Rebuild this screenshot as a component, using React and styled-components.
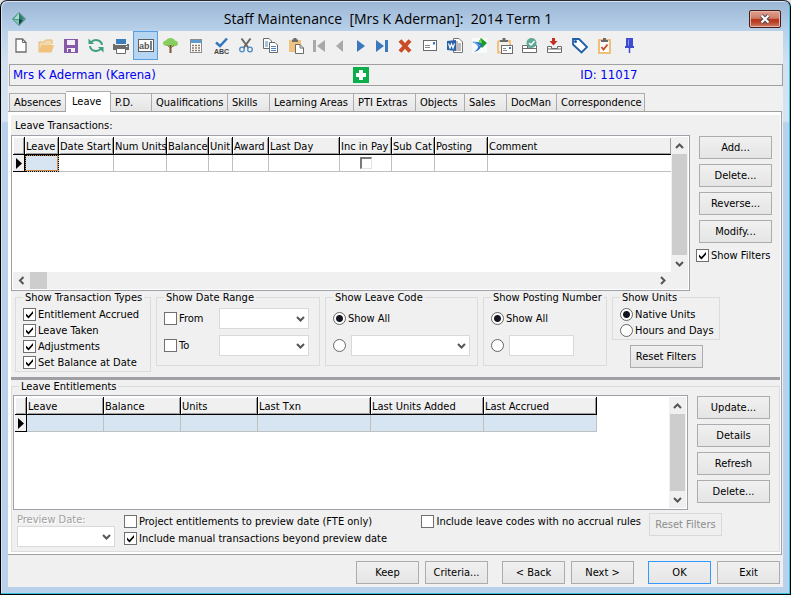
import React from 'react'
import styled, { createGlobalStyle, css } from 'styled-components'

const GlobalStyle = createGlobalStyle`
  * { box-sizing: border-box; }
  body {
    margin: 0;
    background: #dfe3e8;
    color: #000;
    font: 11px/13px "DejaVu Sans Condensed", "DejaVu Sans", sans-serif;
  }
  button, input, select { font: inherit; color: inherit; margin: 0; }
`

const check =
  "url(\"data:image/svg+xml,%3Csvg xmlns='http://www.w3.org/2000/svg' viewBox='0 0 11 11'%3E%3Cpath d='M2 4.5 L4.5 7 L9 2 V4.5 L4.5 9.5 L2 7 Z' fill='%23000'/%3E%3C/svg%3E\")"

/* ---------- window ---------- */

const Window = styled.div`
  min-height: 100vh;
  display: flex;
  flex-direction: column;
  padding: 0 7px 7px;
  border: 1px solid #000;
  border-top-color: #2a2a30;
  border-radius: 7px 7px 0 0;
  background: linear-gradient(#9bb6d5, #b9d1ea 30px, #d2e0f0 60px, #d6e3f2 120px, #b9d1ea 122px);
  box-shadow: inset -1px -1px #35c3dd, inset 1px 1px #d5e4f3;
`

const TitleBar = styled.header`
  display: grid;
  grid-template-columns: 16px 1fr 34px;
  align-items: center;
  height: 30px;
  padding: 6px 0 0 3px;
`

const Title = styled.h1`
  margin: 0;
  font: 14px/20px "Open Sans", "Noto Sans", sans-serif;
  text-align: center;
  white-space: pre;
`

const CloseButton = styled.button`
  width: 32px;
  height: 18px;
  padding: 0;
  display: grid;
  place-items: center;
  border: 1px solid #4a1c18;
  border-radius: 2px;
  background: linear-gradient(#e0a08f, #cf7d68 46%, #b8391d 50%, #b8391d 64%, #cd7a66);
  box-shadow: inset 0 0 0 1px #e6b8ac;
`

const Body = styled.main`
  flex: 1;
  display: flex;
  flex-direction: column;
  background: #f0f0f0;
`

/* ---------- toolbar ---------- */

const ToolBar = styled.div`
  display: flex;
  height: 33px;
`

const ToolButton = styled.button`
  width: ${(p) => (p.$narrow ? '21px' : '25px')};
  height: 29px;
  padding: 0;
  display: grid;
  place-items: center;
  border: 1px solid ${(p) => (p.$active ? '#5a9ee0' : 'transparent')};
  background: ${(p) => (p.$active ? '#b5d5f3' : 'transparent')};
  svg { display: block; overflow: visible; }
`

const NameBar = styled.div`
  display: grid;
  grid-template-columns: 340fr 228fr 202fr;
  align-items: center;
  height: 22px;
  padding-left: 3px;
  margin: 0 0 5px 1px;
  border: 1px solid #a0a0a0;
  color: #0000f0;
  font-size: 13px;
  line-height: 16px;
  svg { display: block; }
`

/* ---------- tabs ---------- */

const Tabs = styled.div`
  display: flex;
  align-items: flex-end;
  height: 20px;
  padding-left: 1px;
`

const Tab = styled.button`
  width: ${(p) => p.$w}px;
  height: 18px;
  padding: 0 0 0 4px;
  text-align: left;
  white-space: nowrap;
  border: 1px solid #acacac;
  border-width: 1px 1px 0 0;
  background: linear-gradient(#f2f2f2, #e5e5e5);
  &:first-child { border-left-width: 1px; }
  ${(p) =>
    p.$active &&
    css`
      height: 21px;
      margin-bottom: -1px;
      padding: 0 0 2px 6px;
      background: #fff;
      position: relative;
    `}
`

const TabPage = styled.section`
  flex: 1;
  display: flex;
  flex-direction: column;
  margin-right: 1px;
  padding: 3px 1px 2px 3px;
  background: #fff;
  border: 1px solid #a0a0a0;
  border-left: 0;
`

const Page = styled.div`
  flex: 1;
  display: flex;
  flex-direction: column;
  background: #f0f0f0;
`

const Caption = styled.h2`
  margin: 0;
  padding: 4px 4px 3px;
  font: inherit;
`

/* ---------- controls ---------- */

const Button = styled.button`
  width: ${(p) => (p.$small ? '63px' : '73px')};
  height: 23px;
  padding: 0;
  border: 1px solid ${(p) => (p.$primary ? '#3399ff' : '#acacac')};
  background: linear-gradient(#f0f0f0, #e5e5e5);
  &:disabled {
    color: #8c8c8c;
    border-color: #d9d9d9;
    background: #efefef;
  }
`

const Choice = styled.label`
  display: flex;
  align-items: center;
  gap: 2px;
  height: 16px;
  white-space: nowrap;
`

const Tick = styled.input`
  appearance: none;
  flex: none;
  width: 13px;
  height: 13px;
  border: 1px solid #707070;
  background: #fff;
  &:checked { background: #fff ${check}; }
`

const GridTick = styled(Tick)`
  display: block;
  width: 12px;
  height: 12px;
  margin: 0 auto;
  border: 1px solid #e3e3e3;
  border-top: 2px solid #7a7a7a;
  border-left: 2px solid #7a7a7a;
`

const Dot = styled.input`
  appearance: none;
  flex: none;
  width: 13px;
  height: 13px;
  border: 1px solid #666;
  border-radius: 50%;
  background: #fff;
  &:checked { background: radial-gradient(circle, #15151f 3px, #fff 4px); }
`

const TextBox = styled.input`
  width: 65px;
  height: 21px;
  border: 1px solid #d9d9d9;
  background: #fff;
`

const ComboFrame = styled.span`
  display: grid;
  align-items: center;
  select, svg { grid-area: 1 / 1; }
  select {
    appearance: none;
    width: 100%;
    height: 21px;
    border: 1px solid #d9d9d9;
    border-radius: 0;
    background: #fff;
    opacity: 1;
  }
  svg {
    justify-self: end;
    margin-right: 4px;
    pointer-events: none;
  }
`

const chevrons = {
  up: 'M1 7 L4.5 3.5 L8 7',
  down: 'M1 3 L4.5 6.5 L8 3',
  left: 'M6.5 1 L3 4.5 L6.5 8',
  right: 'M3 1 L6.5 4.5 L3 8',
}

const Chevron = ({ to }) => (
  <svg width="9" height="9" viewBox="0 0 9 9" aria-hidden="true">
    <path d={chevrons[to]} fill="none" stroke="#555" strokeWidth="2" />
  </svg>
)

const Combo = ({ label, ...rest }) => (
  <ComboFrame>
    <select aria-label={label} {...rest}>
      <option value=""></option>
    </select>
    <Chevron to="down" />
  </ComboFrame>
)

const Check = ({ children, checked }) => (
  <Choice>
    <Tick type="checkbox" defaultChecked={checked} />
    {children}
  </Choice>
)

const Radio = ({ children, ...rest }) => (
  <Choice>
    <Dot type="radio" {...rest} />
    {children}
  </Choice>
)

/* ---------- data grid ---------- */

const GridFrame = styled.div`
  flex: 1;
  min-width: 0;
  min-height: ${(p) => p.$min}px;
  display: grid;
  grid-template-columns: minmax(0, 1fr) 17px;
  grid-template-rows: 1fr auto;
  padding: 1px;
  border: 1px solid #a0a0a8;
  background: #fff;
`

const Table = styled.table`
  table-layout: fixed;
  align-self: start;
  width: ${(p) => (p.$fill ? '100%' : '582px')};
  border-collapse: separate;
  border-spacing: 0;
  th, td {
    padding: 0 0 0 1px;
    overflow: hidden;
    white-space: nowrap;
    text-align: left;
    font-weight: normal;
  }
  th {
    height: 18px;
    padding-top: 1px;
    background: #f0f0f0;
    border-right: 1px solid #000;
    border-bottom: 1px solid #000;
    box-shadow: inset 1px 1px #fff, inset -1px -1px #a0a0a0;
  }
  td {
    height: 17px;
    border-right: 1px solid #c0c0c0;
    border-bottom: 1px solid #c0c0c0;
    background: ${(p) => (p.$tint ? '#d7e4f2' : '#fff')};
  }
  td:first-child {
    background: #f0f0f0;
    border-color: #000;
  }
  ${(p) =>
    p.$fill &&
    css`
      th:last-child, td:last-child { border-right: 0; }
    `}
`

const FocusCell = styled.td`
  && {
    background: #d7e4f2;
    outline: 1px dotted #000;
    outline-offset: -1px;
    box-shadow: inset 0 0 0 1px #d08a45;
  }
`

const ScrollBar = styled.div`
  display: flex;
  flex-direction: ${(p) => (p.$across ? 'row' : 'column')};
  padding: ${(p) => (p.$across ? '0' : '0 1px')};
  background: #f0f0f0;
`

const ScrollButton = styled.button`
  flex: none;
  min-width: 15px;
  height: 17px;
  padding: 0 ${(p) => (p.$across ? '4px' : '0')};
  display: grid;
  place-items: center;
  border: 0;
  background: none;
`

const Thumb = styled.div`
  background: #cdcdcd;
  ${(p) => (p.$across ? 'width: 17px; margin-right: auto;' : 'flex: 1;')}
`

const VerticalBar = () => (
  <ScrollBar>
    <ScrollButton aria-label="Scroll up"><Chevron to="up" /></ScrollButton>
    <Thumb />
    <ScrollButton aria-label="Scroll down"><Chevron to="down" /></ScrollButton>
  </ScrollBar>
)

const MarkerIcon = styled.svg`
  display: block;
  margin-left: 2px;
`

const Marker = () => (
  <MarkerIcon width="7" height="11" viewBox="0 0 7 11" aria-hidden="true">
    <path d="M0 0 L6 5.5 L0 11 Z" />
  </MarkerIcon>
)

/* ---------- sections ---------- */

const Split = styled.div`
  flex: ${(p) => (p.$grow ? '1' : 'none')};
  display: flex;
`

const Side = styled.div`
  flex: none;
  display: flex;
  flex-direction: column;
  align-items: flex-start;
  gap: 5px;
  padding: 1px ${(p) => (p.$inset ? '9px' : '8px')} 0 9px;
`

const SideCheck = styled.div`
  margin: -1px -6px 0 -3px;
`

const Filters = styled.div`
  display: flex;
  align-items: flex-start;
  gap: 5px;
  padding: 0 4px 5px;
`

const Group = styled.fieldset`
  flex: none;
  width: ${(p) => p.$w}px;
  min-width: 0;
  margin: 0;
  padding: ${(p) => (p.$roomy ? '4px 7px 9px' : '2px 7px 1px')};
  border: 1px solid #dcdcdc;
  legend { padding: 0 2px; white-space: nowrap; }
`

const FieldGrid = styled.div`
  display: grid;
  grid-template-columns: ${(p) => p.$cols};
  gap: 6px 0;
  align-items: center;
`

const Wide = styled.div`
  grid-column: 1 / -1;
  height: 21px;
  display: flex;
  align-items: center;
`

const UnitsColumn = styled.div`
  display: flex;
  flex-direction: column;
  align-items: center;
  gap: 5px;
`

const Splitter = styled.hr`
  width: 100%;
  height: 3px;
  margin: 0;
  border: 0;
  background: #a0a0a4;
`

const Entitlements = styled.fieldset`
  flex: 1;
  display: flex;
  flex-direction: column;
  min-width: 0;
  margin: 0;
  padding: 2px 0 3px 1px;
  border: 1px solid #dcdcdc;
  legend { margin-left: 6px; padding: 0 2px; }
`

const Options = styled.div`
  display: flex;
  align-items: flex-start;
  padding: 3px 57px 0 4px;
`

const Preview = styled.label`
  width: 98px;
  margin-right: 9px;
  color: #a0a0a0;
  text-shadow: 1px 1px #fff;
`

const OptionList = styled.div`
  display: flex;
  flex-direction: column;
  gap: 1px;
  &:nth-of-type(2) { margin: 0 8px 0 auto; }
`

const Footer = styled.footer`
  display: flex;
  justify-content: flex-end;
  gap: 14px;
  padding: 6px 3px 3px;
`

const FooterPair = styled.div`
  display: flex;
  gap: 6px;
`

/* ---------- icons ---------- */

const Icon = ({ w = 16, h = 16, children }) => (
  <svg width={w} height={h} viewBox={`0 0 ${w} ${h}`} fill="none" aria-hidden="true">
    {children}
  </svg>
)

const AppIcon = () => (
  <Icon w={16} h={16}>
    <path d="M8 1 L15 8 L8 15 L1 8 Z" fill="#4f9d90" stroke="#7fa5ae" />
    <path d="M8 2 V8 H3 Z" fill="#a9dccd" />
    <path d="M8 2 V8 H13 Z" fill="#2f7d6e" />
    <path d="M3 9 H8 V14 Z" fill="#7ec6b4" />
    <path d="M8 8 L12 9 L8 14 Z" fill="#1d3f42" />
  </Icon>
)

const tools = [
  ['New', <Icon w={12} h={15}><path d="M1 1 H7.500 L11 4.500 V14 H1 Z" fill="#fff" stroke="#6d6d6d" strokeWidth="1.300" /><path d="M7.500 1 V4.500 H11" stroke="#6d6d6d" /></Icon>],
  ['Open', <Icon w={16} h={14}><path d="M1 13 V3 H6 L7.500 1 H14 V5" fill="#f5d9ae" /><path d="M1 13 V3 H6 L7.500 1 H14 V5" stroke="#e5b772" /><path d="M3.500 6 H16 L13.500 13.500 H0.500 Z" fill="#f1c27c" /></Icon>],
  ['Save', <Icon w={14} h={14}><path d="M0 0 H14 V14 H0 Z" fill="#8659a8" /><path d="M3 1 H11 V6 H3 Z M3 9 H11 V13 H3 Z" fill="#f4eef8" /><path d="M4 10 H7 V13 H4 Z" fill="#8659a8" /></Icon>],
  ['Refresh', <Icon w={16} h={15}><path d="M3 4.500 A6 5.500 0 0 1 14 7 M13 10.500 A6 5.500 0 0 1 2 8" stroke="#3d9f80" strokeWidth="2" /><path d="M0.500 0.500 V6 H6 Z M15.500 14.500 V9 H10 Z" fill="#3d9f80" /></Icon>],
  ['Print', <Icon><path d="M3 1 H13 V6 H3 Z" fill="#3c7ebb" /><path d="M0 6 H16 V12 H0 Z" fill="#6b6b6b" /><path d="M2 5 H14 V7 H2 Z" fill="#f0f0f0" /><path d="M3 1 H13 V6 H3 Z" fill="#3c7ebb" /><path d="M3.500 10.500 H12.500 V15.500 H3.500 Z" fill="#fff" stroke="#6b6b6b" /><path d="M13 8 h1.500 v1 H13 Z" fill="#fff" /></Icon>],
  ['Edit text', <Icon w={16} h={13}><rect x="0.500" y="0.500" width="15" height="12" fill="#fff" stroke="#5f5f5f" /><text x="1" y="10" fontSize="9" fontWeight="bold" fontFamily="Liberation Sans, sans-serif" fill="#555">ab</text><path d="M13 2 V11" stroke="#000" /></Icon>],
  ['Tree', <Icon w={15} h={15}><path d="M4 8 Q0 8 0 5 Q0 3 3 2.500 Q4 0 7.500 0 Q11 0 12 2.500 Q15 3 15 6 Q14 9 10 8 Z" fill="#86cf5f" /><path d="M4.500 7.500 L7.500 10 L11 7.500" stroke="#8a6a38" /><path d="M7.500 7 V15" stroke="#7a5b31" strokeWidth="2" /></Icon>],
  ['Calculator', <Icon w={12} h={14}><rect x="0.500" y="0.500" width="11" height="13" fill="#fff" stroke="#8c8c8c" /><path d="M1 1 H11 V4 H1 Z" fill="#5a9cd2" /><path d="M2 6.500 H10 M2 9 H10 M2 11.500 H10" stroke="#8f7a68" strokeWidth="1.500" strokeDasharray="2 1" /></Icon>],
  ['Spelling', <Icon w={14} h={16}><path d="M2 4.500 L6 8 L13 0.500" stroke="#3577bd" strokeWidth="2.500" /><text x="0" y="15.500" fontSize="7" fontWeight="bold" fontFamily="Liberation Sans, sans-serif" fill="#444">ABC</text></Icon>],
  ['Cut', <Icon w={14} h={15}><path d="M2.500 0.500 L9.500 10 M11.500 0.500 L4.500 10" stroke="#666" strokeWidth="2" /><circle cx="3" cy="11.500" r="2.300" stroke="#4a87c4" strokeWidth="1.300" /><circle cx="11" cy="11.500" r="2.300" stroke="#4a87c4" strokeWidth="1.300" /></Icon>],
  ['Copy', <Icon w={15} h={15}><path d="M0.500 0.500 H6 L8.500 3 V10.500 H0.500 Z" fill="#fff" stroke="#6b6b6b" /><path d="M2 4 H5 M2 6 H5 M2 8 H5" stroke="#4a87c4" /><path d="M6.500 4.500 H12 L14.500 7 V14.500 H6.500 Z" fill="#fff" stroke="#6b6b6b" /><path d="M8 8.500 H13 M8 10.500 H13 M8 12.500 H13" stroke="#4a87c4" /></Icon>],
  ['Paste', <Icon w={16} h={16}><path d="M1 2 H13 V14 H1 Z" fill="#efc27f" /><path d="M4 1.500 H5.500 V0 H8.500 V1.500 H10 V4 H4 Z" fill="#6b6b6b" /><path d="M7.500 6.500 H12 L15.500 10 V15.500 H7.500 Z" fill="#fff" stroke="#6b6b6b" /><path d="M12 6.500 V10 H15.500" stroke="#6b6b6b" /></Icon>],
  ['First', <Icon w={12} h={12}><path d="M0 0 H3 V12 H0 Z M12 0 V12 L4 6 Z" fill="#a9a9a9" /></Icon>, 'nav'],
  ['Previous', <Icon w={7} h={12}><path d="M7 0 V12 L0 6 Z" fill="#a9a9a9" /></Icon>, 'nav'],
  ['Next record', <Icon w={8} h={12}><path d="M0 0 V12 L8 6 Z" fill="#3c78bd" /></Icon>, 'nav'],
  ['Last', <Icon w={12} h={12}><path d="M0 0 V12 L8 6 Z M9 0 H12 V12 H9 Z" fill="#3c78bd" /></Icon>, 'nav'],
  ['Delete record', <Icon w={14} h={14}><path d="M2 1.500 L12 12.500 M12 1.500 L2 12.500" stroke="#c94c25" strokeWidth="4" /></Icon>],
  ['Mail', <Icon w={14} h={11}><rect x="0.500" y="0.500" width="13" height="10" fill="#fff" stroke="#6b6b6b" /><path d="M2 5.500 H7 M2 7.500 H7" stroke="#888" /><path d="M10 2 H12 V4.500 H10 Z" fill="#3c78bd" /></Icon>],
  ['Word', <Icon w={16} h={15}><path d="M6.500 0.500 H12 L15.500 4 V14.500 H6.500 Z" fill="#fff" stroke="#777" /><path d="M9 6 H14 M9 8 H14 M9 10 H14 M9 12 H14 M9 4 H11" stroke="#777" /><path d="M0 3 L9 2 V13 L0 12 Z" fill="#2b5fa8" /><path d="M1.500 5.500 L3 10 L4.500 6 L6 10 L7.500 5.500" stroke="#fff" strokeWidth="1.200" /></Icon>],
  ['Synergy', <Icon w={15} h={15}><path d="M0 0 H15 V15 H0 Z" fill="#f7fbfb" /><path d="M9 0 L15 5 L10 10 L6 5 Z" fill="#189a2c" /><path d="M9 0 L10 5 L6 5 Z" fill="#6bd04c" /><path d="M0 4 Q5 3 10 6 L9 9 Q7 13 2 14 Q7 10 6 8 Q4 5 0 4 Z" fill="#2f6fd0" /><path d="M1 4 Q5 5 8 8" stroke="#6fc3ef" /></Icon>],
  ['Paste mail', <Icon w={16} h={16}><path d="M1 3 V14.500 H5 M13 7 V3 H1" stroke="#efc27f" strokeWidth="2" /><path d="M3 2 H5.500 V0 H8.500 V2 H11 V4 H3 Z" fill="#6b6b6b" /><rect x="4.500" y="7.500" width="11" height="8" fill="#fff" stroke="#6b6b6b" /><path d="M6 12.500 H10 M6 10.500 H9" stroke="#888" /><path d="M12 9 H14 V11 H12 Z" fill="#3c78bd" /></Icon>],
  ['Approve', <Icon w={15} h={15}><path d="M0.500 7.500 H5.500 V10 H9.500 V7.500 H14.500 V14.500 H0.500 Z" fill="#fff" stroke="#6b6b6b" /><path d="M0.500 10.500 H14.500" stroke="#6b6b6b" /><circle cx="9.500" cy="5" r="5" fill="#5aa896" /><path d="M7 5 L9 7 L12.500 3" stroke="#fff" strokeWidth="1.500" /></Icon>],
  ['Import', <Icon w={15} h={15}><path d="M0.500 8.500 H4.500 V10.500 H10.500 V8.500 H14.500 V14.500 H0.500 Z" fill="#fff" stroke="#6b6b6b" /><path d="M0.500 11 H14.500" stroke="#6b6b6b" /><path d="M5 0 H8 V3 H10.500 L6.500 7.500 L2.500 3 H5 Z" fill="#c52f20" /></Icon>],
  ['Tag', <Icon w={16} h={15}><path d="M1 1 H7 L15 9 L9.500 14.500 L1 6.500 Z" fill="#fff" stroke="#1f5ea8" strokeWidth="1.800" /><circle cx="3.500" cy="3.500" r="1.500" fill="#1f5ea8" /></Icon>],
  ['Tasks', <Icon w={13} h={16}><rect x="1" y="2" width="11" height="13" fill="#fdfdfd" stroke="#f0c07a" strokeWidth="2" /><path d="M3 2 H5 V0 H8 V2 H10 V4 H3 Z" fill="#6b6b6b" /><path d="M3.500 9 L5.500 11.500 L9.500 6.500" stroke="#c94c25" strokeWidth="1.800" /></Icon>],
  ['Pin', <Icon w={9} h={15}><path d="M1 0 H8 V8 H9 V10 H0 V8 H1 Z" fill="#3f4bd0" /><path d="M3.500 1.500 V7.500" stroke="#8d95ec" /><path d="M4.500 9 V15" stroke="#3f4bd0" strokeWidth="1.500" /></Icon>],
]

const tabs = [
  ['Absences', 57],
  ['Leave', 45],
  ['P.D.', 41],
  ['Qualifications', 76],
  ['Skills', 42],
  ['Learning Areas', 84],
  ['PTI Extras', 62],
  ['Objects', 49],
  ['Sales', 42],
  ['DocMan', 50],
  ['Correspondence', 88],
]

const transactionColumns = [
  ['Leave', 34],
  ['Date Start', 55],
  ['Num Units', 53],
  ['Balance', 42],
  ['Unit', 24],
  ['Award', 36],
  ['Last Day', 71],
  ['Inc in Pay', 52],
  ['Sub Cat', 43],
  ['Posting', 53],
  ['Comment'],
]

const entitlementColumns = [
  ['Leave', 77],
  ['Balance', 77],
  ['Units', 77],
  ['Last Txn', 113],
  ['Last Units Added', 113],
  ['Last Accrued', 113],
]

const GridHead = ({ columns }) => (
  <>
    <colgroup>
      <col width="12" />
      {columns.map(([name, width]) => (
        <col key={name} width={width} />
      ))}
    </colgroup>
    <thead>
      <tr>
        <th></th>
        {columns.map(([name]) => (
          <th key={name} scope="col">{name}</th>
        ))}
      </tr>
    </thead>
  </>
)

const TransactionGrid = () => (
  <GridFrame $min={156}>
    <Table $fill aria-label="Leave Transactions">
      <GridHead columns={transactionColumns} />
      <tbody>
        <tr>
          <td><Marker /></td>
          <FocusCell />
          {transactionColumns.slice(1).map(([name]) => (
            <td key={name}>
              {name === 'Inc in Pay' && <GridTick type="checkbox" aria-label={name} />}
            </td>
          ))}
        </tr>
      </tbody>
    </Table>
    <VerticalBar />
    <ScrollBar $across>
      <ScrollButton $across aria-label="Scroll left"><Chevron to="left" /></ScrollButton>
      <Thumb $across />
      <ScrollButton $across aria-label="Scroll right"><Chevron to="right" /></ScrollButton>
    </ScrollBar>
    <ScrollBar />
  </GridFrame>
)

const EntitlementGrid = () => (
  <GridFrame $min={115}>
    <Table $tint aria-label="Leave Entitlements">
      <GridHead columns={entitlementColumns} />
      <tbody>
        <tr>
          <td><Marker /></td>
          {entitlementColumns.map(([name]) => (
            <td key={name}></td>
          ))}
        </tr>
      </tbody>
    </Table>
    <VerticalBar />
  </GridFrame>
)

const FilterPanel = () => (
  <Filters>
    <Group $w={136}>
      <legend>Show Transaction Types</legend>
      <Check checked>Entitlement Accrued</Check>
      <Check checked>Leave Taken</Check>
      <Check checked>Adjustments</Check>
      <Check checked>Set Balance at Date</Check>
    </Group>
    <Group $w={164} $roomy>
      <legend>Show Date Range</legend>
      <FieldGrid $cols="55px 90px">
        <Check>From</Check>
        <Combo label="From date" />
        <Check>To</Check>
        <Combo label="To date" />
      </FieldGrid>
    </Group>
    <Group $w={153} $roomy>
      <legend>Show Leave Code</legend>
      <FieldGrid $cols="18px 1fr">
        <Wide><Radio name="code" defaultChecked>Show All</Radio></Wide>
        <Radio name="code" aria-label="One leave code" />
        <Combo label="Leave code" />
      </FieldGrid>
    </Group>
    <Group $w={124} $roomy>
      <legend>Show Posting Number</legend>
      <FieldGrid $cols="18px 1fr">
        <Wide><Radio name="posting" defaultChecked>Show All</Radio></Wide>
        <Radio name="posting" aria-label="One posting number" />
        <TextBox aria-label="Posting number" />
      </FieldGrid>
    </Group>
    <UnitsColumn>
      <Group $w={108}>
        <legend>Show Units</legend>
        <Radio name="units" defaultChecked>Native Units</Radio>
        <Radio name="units">Hours and Days</Radio>
      </Group>
      <Button>Reset Filters</Button>
    </UnitsColumn>
  </Filters>
)

const App = () => {
  const [tab, setTab] = React.useState('Leave')

  return (
    <>
      <GlobalStyle />
      <Window>
        <TitleBar>
          <AppIcon />
          <Title>{'Staff Maintenance  [Mrs K Aderman]:  2014 Term 1'}</Title>
          <CloseButton aria-label="Close">
            <svg width="12" height="10" viewBox="0 0 12 10" aria-hidden="true">
              <path d="M2.500 1.500 L9.500 8.500 M9.500 1.500 L2.500 8.500" stroke="#4d4d58" strokeWidth="4" />
              <path d="M2.500 1.500 L9.500 8.500 M9.500 1.500 L2.500 8.500" stroke="#fff" strokeWidth="2" />
            </svg>
          </CloseButton>
        </TitleBar>

        <Body>
          <ToolBar role="toolbar">
            {tools.map(([name, icon, kind]) => (
              <ToolButton
                key={name}
                aria-label={name}
                $narrow={kind === 'nav'}
                $active={name === 'Edit text'}
              >
                {icon}
              </ToolButton>
            ))}
          </ToolBar>

          <NameBar>
            <span>Mrs K Aderman (Karena)</span>
            <Icon>
              <path d="M0 0 H16 V16 H0 Z" fill="#0bae4b" />
              <path d="M6 3 H10 V6 H13 V10 H10 V13 H6 V10 H3 V6 H6 Z" fill="#fff" />
            </Icon>
            <span>ID: 11017</span>
          </NameBar>

          <Tabs role="tablist">
            {tabs.map(([name, width]) => (
              <Tab
                key={name}
                role="tab"
                aria-selected={tab === name}
                $w={width}
                $active={tab === name}
                onClick={() => setTab(name)}
              >
                {name}
              </Tab>
            ))}
          </Tabs>

          <TabPage>
            <Page>
              <Caption>Leave Transactions:</Caption>
              <Split>
                <TransactionGrid />
                <Side>
                  <Button>Add...</Button>
                  <Button>Delete...</Button>
                  <Button>Reverse...</Button>
                  <Button>Modify...</Button>
                  <SideCheck>
                    <Check checked>Show Filters</Check>
                  </SideCheck>
                </Side>
              </Split>
              <FilterPanel />
              <Splitter />
              <Entitlements>
                <legend>Leave Entitlements</legend>
                <Split $grow>
                  <EntitlementGrid />
                  <Side $inset>
                    <Button>Update...</Button>
                    <Button>Details</Button>
                    <Button>Refresh</Button>
                    <Button>Delete...</Button>
                  </Side>
                </Split>
                <Options>
                  <Preview>
                    Preview Date:
                    <Combo label="Preview Date" disabled />
                  </Preview>
                  <OptionList>
                    <Check>Project entitlements to preview date (FTE only)</Check>
                    <Check checked>Include manual transactions beyond preview date</Check>
                  </OptionList>
                  <OptionList>
                    <Check>Include leave codes with no accrual rules</Check>
                  </OptionList>
                  <Button disabled>Reset Filters</Button>
                </Options>
              </Entitlements>
            </Page>
          </TabPage>

          <Footer>
            <FooterPair>
              <Button $small>Keep</Button>
              <Button $small>Criteria...</Button>
            </FooterPair>
            <FooterPair>
              <Button $small>&lt; Back</Button>
              <Button $small>Next &gt;</Button>
            </FooterPair>
            <FooterPair>
              <Button $small $primary>OK</Button>
              <Button $small>Exit</Button>
            </FooterPair>
          </Footer>
        </Body>
      </Window>
    </>
  )
}

export default App
